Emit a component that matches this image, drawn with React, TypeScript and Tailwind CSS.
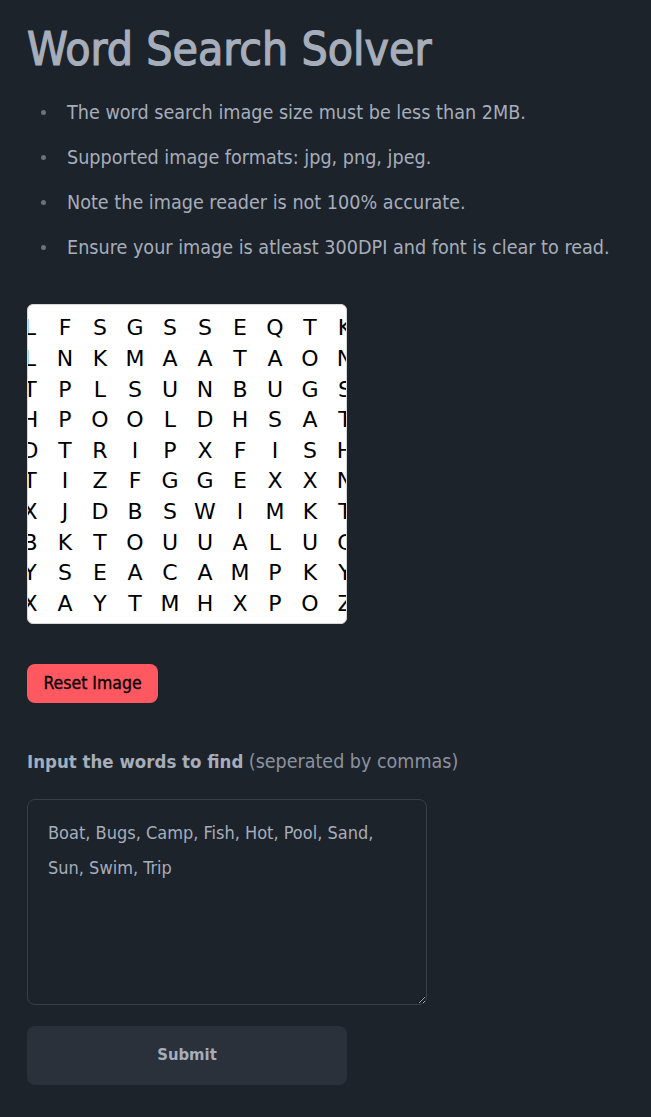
import React from "react";

const rows = [
  "LFSGSSEQTK",
  "LNKMAATAON",
  "TPLSUNBUGS",
  "HPOOLDHSAT",
  "DTRIPXFISH",
  "TIZFGGEXXN",
  "XJDBSWIMKT",
  "BKTOUUALUC",
  "YSEACAMPKY",
  "XAYTMHXPOZ",
];

const tips = [
  "The word search image size must be less than 2MB.",
  "Supported image formats: jpg, png, jpeg.",
  "Note the image reader is not 100% accurate.",
  "Ensure your image is atleast 300DPI and font is clear to read.",
];

export default function App() {
  return (
    <div
      className="min-h-[1117px] w-full bg-[#1d232a] text-[#a6adbb] px-[27px]"
      style={{ fontFamily: '"DejaVu Sans Condensed", "DejaVu Sans", sans-serif' }}
    >
      <h1 className="pt-[25px] text-[46px] leading-[48px] font-normal text-[#a6adbb] [-webkit-text-stroke:1.2px_#a6adbb]">
        Word Search Solver
      </h1>
      <ul className="mt-[17px] text-[19.6px] leading-[45px]">
        {tips.map((t) => (
          <li key={t} className="flex items-center">
            <span className="ml-[14px] mr-[21px] h-[5px] w-[5px] shrink-0 rounded-full bg-[#6b727d]" />
            <span>{t}</span>
          </li>
        ))}
      </ul>
      <div className="mt-[34px] w-[320px] h-[320px] rounded-[6px] bg-white overflow-hidden border border-[#d8d8d8]">
        <div
          className="grid grid-cols-[repeat(10,35px)] grid-rows-[repeat(10,30.6px)] ml-[-15.5px] mt-[7.7px] text-[22px] text-black"
          style={{ fontFamily: '"DejaVu Sans", sans-serif' }}
        >
          {rows.map((r, i) =>
            r.split("").map((c, j) => (
              <div key={i + "-" + j} className="flex items-center justify-center">
                {c}
              </div>
            ))
          )}
        </div>
      </div>
      <button className="mt-[40px] h-[39px] w-[131px] rounded-[8px] bg-[#ff5861] text-[17.5px] text-black [-webkit-text-stroke:0.3px_#000]">
        Reset Image
      </button>
      <p className="mt-[44px] text-[19px] leading-[28px]">
        <span className="font-bold text-[18.5px]">Input the words to find</span>{" "}
        <span className="text-[19.5px] text-[#8b929f]">(seperated by commas)</span>
      </p>
      <textarea
        className="mt-[23px] block w-[400px] h-[206px] rounded-[8px] border border-[#383f47] bg-[#1d232a] pt-[15px] pl-[20px] pr-[24px] text-[18px] leading-[35px] text-[#a6adbb] outline-none"
        defaultValue="Boat, Bugs, Camp, Fish, Hot, Pool, Sand, Sun, Swim, Trip"
        style={{ fontFamily: '"DejaVu Sans Condensed", "DejaVu Sans", sans-serif' }}
      />
      <button className="mt-[21px] h-[59px] w-[320px] rounded-[8px] bg-[#2a313b] text-[16.5px] font-bold text-[#a6adbb]">
        Submit
      </button>
    </div>
  );
}
